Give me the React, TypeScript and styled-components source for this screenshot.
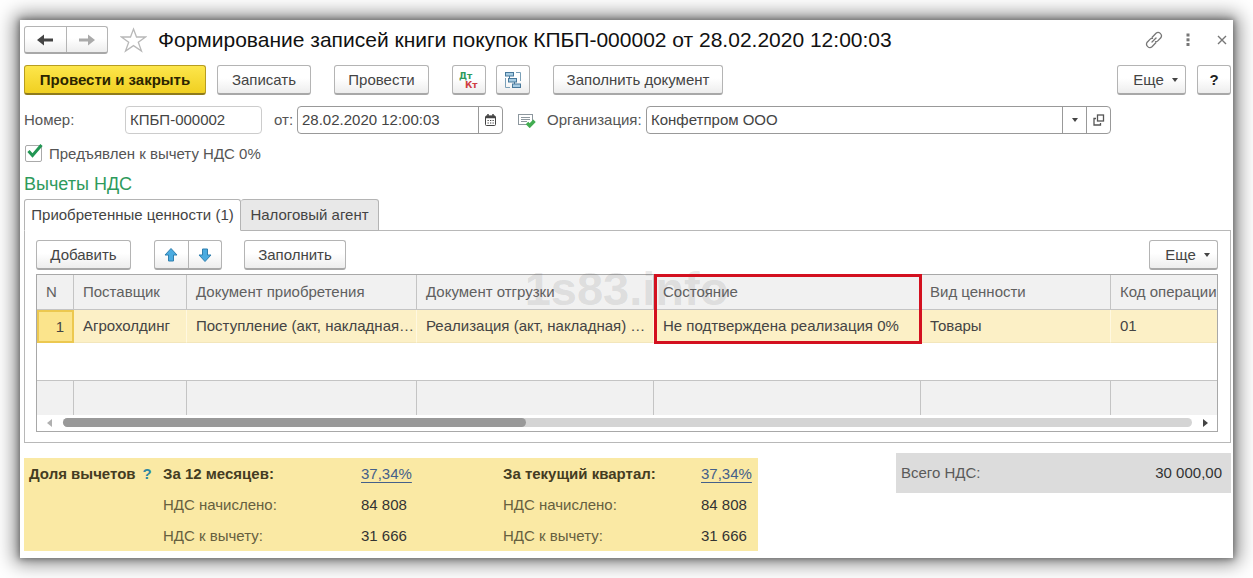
import React from "react";
import styled, { createGlobalStyle, css } from "styled-components";

const GlobalStyle = createGlobalStyle`
  * { box-sizing: border-box; }
  body {
    margin: 0;
    background: #fff;
    font-family: "Liberation Sans", Arial, sans-serif;
    font-size: 15px;
    line-height: 20px;
    color: #444;
  }
  button, input { font: inherit; color: inherit; margin: 0; }
  svg { display: block; flex: none; }
`;

const Page = styled.div`
  position: relative;
  padding: 20px;
`;

const Window = styled.main`
  display: flex;
  flex-direction: column;
  padding: 6px 2px 7px 4px;
  background: #fff;
  box-shadow: 0 0 6px 1px rgba(0, 0, 0, 0.35), 0 0 18px 5px rgba(0, 0, 0, 0.5);
`;

const Watermark = styled.div`
  position: absolute;
  inset: 0;
  display: flex;
  align-items: center;
  justify-content: center;
  font-size: 47px;
  font-weight: bold;
  color: rgba(90, 90, 90, 0.14);
  pointer-events: none;
`;

const TitleBar = styled.header`
  display: flex;
  align-items: center;
  height: 28px;
`;

const Title = styled.h1`
  flex: 1;
  margin: 0 0 0 11px;
  font-size: 21px;
  line-height: 28px;
  font-weight: normal;
  color: #111;
  white-space: nowrap;
`;

const raised = css`
  border: 1px solid #b4b4b4;
  border-bottom: 2px solid #a8a8a8;
  border-radius: 3px;
  background: linear-gradient(#fff 45%, #ededed);
`;

const SplitButtons = styled.div<{ $size: "nav" | "move" }>`
  ${raised}
  display: flex;
  height: ${(p) => (p.$size === "nav" ? 28 : 30)}px;
  width: ${(p) => (p.$size === "nav" ? 84 : 68)}px;
  margin-right: 12px;
`;

const SplitPart = styled.button`
  flex: 1;
  display: flex;
  align-items: center;
  justify-content: center;
  padding: 0;
  border: 0;
  background: none;
  & + & { border-left: 1px solid #b4b4b4; }
`;

const GhostButton = styled.button`
  display: flex;
  align-items: center;
  justify-content: center;
  width: 18px;
  height: 28px;
  padding: 0;
  border: 0;
  background: none;
`;

const WindowTools = styled.div`
  display: flex;
  gap: 16px;
`;

const StarButton = styled(GhostButton)`
  width: 27px;
`;

const Commands = styled.div`
  display: flex;
  align-items: center;
  gap: 11px;
`;

const MainCommands = styled(Commands)`
  margin-top: 11px;
`;

const Group = styled.div<{ $last?: boolean }>`
  display: flex;
  gap: 10px;
  margin-left: 12px;
  margin-right: ${(p) => (p.$last ? 12 : 0)}px;
`;

const Spacer = styled.div`
  flex: 1;
`;

const Button = styled.button<{ $width?: number; $primary?: boolean }>`
  ${raised}
  display: flex;
  align-items: center;
  justify-content: center;
  gap: 8px;
  min-width: ${(p) => p.$width ?? 34}px;
  height: 30px;
  padding: 0;
  white-space: nowrap;
  ${(p) =>
    p.$primary &&
    css`
      border-color: #b79d21 #b79d21 #8f7b1c;
      background: linear-gradient(#fde64b, #f0d022);
      color: #2b2500;
      font-weight: bold;
    `}
`;

const MoreButton = styled(Button)`
  padding-left: 8px;
`;

const HelpButton = styled(Button)`
  font-weight: bold;
  color: #222;
`;

const Fields = styled.div`
  display: flex;
  align-items: center;
  height: 28px;
  margin-top: 11px;
`;

const FieldLabel = styled.label<{ $width: number }>`
  flex: none;
  width: ${(p) => p.$width}px;
  white-space: nowrap;
  color: #555;
`;

const Field = styled.div<{ $width?: number; $light?: boolean }>`
  display: flex;
  ${(p) => (p.$width ? `width: ${p.$width}px;` : "flex: 1;")}
  height: 28px;
  border: 1px solid ${(p) => (p.$light ? "#ccc" : "#999")};
  border-radius: 4px;
  overflow: hidden;
`;

const FieldInput = styled.input`
  flex: 1;
  min-width: 0;
  padding: 0 4px;
  border: 0;
  background: none;
  outline: 0;
`;

const FieldButton = styled.button`
  display: flex;
  align-items: center;
  justify-content: center;
  width: 24px;
  padding: 0;
  border: 0;
  border-left: 1px solid #999;
  background: none;
`;

const FromLabel = styled(FieldLabel)`
  margin-left: 12px;
`;

const StatusIcon = styled.span`
  margin: 0 11px 0 15px;
`;

const OrgField = styled(Field)`
  margin-right: 120px;
`;

const CheckRow = styled.label`
  display: flex;
  align-items: center;
  gap: 6px;
  height: 20px;
  margin-top: 10px;
  color: #555;
`;

const CheckWrap = styled.span`
  position: relative;
  display: block;
  width: 19px;
  height: 18px;
  svg { position: absolute; left: 3px; top: -1px; pointer-events: none; }
`;

const CheckBox = styled.input`
  appearance: none;
  display: block;
  width: 17px;
  height: 17px;
  margin: 0 0 0 1px;
  border: 1px solid #aaa;
  border-radius: 2px;
  background: #fff;
`;

const SectionTitle = styled.h2`
  margin: 9px 0 0;
  font-size: 18px;
  line-height: 22px;
  font-weight: normal;
  color: #2e9a5c;
`;

const Tabs = styled.div`
  display: flex;
  height: 32px;
  margin-top: 4px;
  position: relative;
  z-index: 1;
  margin-bottom: -1px;
`;

const Tab = styled.button<{ $active?: boolean }>`
  width: ${(p) => (p.$active ? 217 : 138)}px;
  padding: 0;
  border: 1px solid #b4b4b4;
  border-bottom-color: ${(p) => (p.$active ? "#fff" : "#b4b4b4")};
  border-left-width: ${(p) => (p.$active ? 1 : 0)}px;
  border-radius: 3px 3px 0 0;
  background: ${(p) => (p.$active ? "#fff" : "#e8e8e8")};
  white-space: nowrap;
`;

const Panel = styled.section`
  padding: 9px 12px 10px 11px;
  border: 1px solid #b8b8b8;
`;

const TableFrame = styled.div`
  margin-top: 4px;
  border: 1px solid #a8a8a8;
  padding-bottom: 4px;
`;

const Table = styled.table`
  width: 100%;
  table-layout: fixed;
  border-collapse: separate;
  border-spacing: 0;
  th, td {
    padding: 0 0 0 9px;
    text-align: left;
    font-weight: normal;
    white-space: nowrap;
    border-right: 1px solid #c4c4c4;
  }
  th:last-child, td:last-child { border-right: 0; }
`;

const HeadCell = styled.th`
  position: relative;
  height: 35px;
  background: #f1f1f1;
  border-bottom: 1px solid #c4c4c4;
  color: #606060;
`;

const BodyCell = styled.td`
  height: 33px;
  background: #fcf0c6;
  border-bottom: 1px solid #f3e6bb;
  && { border-right-color: #fff8e0; }
`;

const NumberCell = styled(BodyCell)`
  && {
    padding: 0 8px 0 0;
    text-align: right;
    border: 2px solid #ecc850;
    background: #fbe48c;
  }
`;

const EmptyCell = styled.td`
  height: 37px;
  && { border-right: 0; }
`;

const TotalCell = styled.td`
  height: 35px;
  background: #f1f1f1;
  border-top: 1px solid #c4c4c4;
`;

const Highlight = styled.span`
  position: absolute;
  z-index: 2;
  left: 0;
  right: -2px;
  top: -1px;
  height: 70px;
  border: 3px solid #d3101f;
  pointer-events: none;
`;

const ScrollRow = styled.div`
  display: flex;
  align-items: center;
  gap: 11px;
  height: 9px;
  margin: 3px 9px 0 10px;
`;

const Track = styled.div`
  flex: 1;
  height: 9px;
  border-radius: 5px;
  background: #d4d4d4;
`;

const Thumb = styled.div`
  width: 41%;
  height: 9px;
  border-radius: 5px;
  background: #999;
`;

const Summary = styled.footer`
  display: flex;
  align-items: flex-start;
  justify-content: space-between;
  margin-top: 10px;
`;

const Share = styled.div`
  display: grid;
  grid-template-columns: 134px 198px 142px 198px 57px;
  grid-auto-rows: 31px;
  align-items: center;
  width: 734px;
  margin-top: 5px;
  padding-left: 5px;
  background: #fae9a4;
  white-space: nowrap;
`;

const ShareTitle = styled.strong`
  grid-column: 1;
  color: #443c22;
`;

const Hint = styled.a`
  margin-left: 7px;
  color: #2f87a0;
  text-decoration: none;
`;

const Period = styled.strong`
  color: #443c22;
`;

const Caption = styled.span<{ $first?: boolean }>`
  ${(p) => p.$first && "grid-column: 2;"}
  color: #66603f;
`;

const Percent = styled.a`
  color: #44608a;
  text-underline-offset: 3px;
`;

const Total = styled.div`
  display: flex;
  align-items: center;
  justify-content: space-between;
  width: 335px;
  height: 40px;
  padding: 0 9px 0 5px;
  background: #dcdcdc;
  color: #5a5a5a;
`;

const Amount = styled.span`
  color: #333;
`;

const NavArrow = ({ color, flip }: { color: string; flip?: boolean }) => (
  <svg width="16" height="12" viewBox="0 0 16 12" fill={color}>
    <path d={flip ? "M16 6 9 0.500V4.500H0V7.500H9V11.500Z" : "M0 6 7 0.500V4.500H16V7.500H7V11.500Z"} />
  </svg>
);

const Star = () => (
  <svg width="27" height="26" viewBox="0 0 27 26" fill="#fff" stroke="#b8b8b8" strokeWidth="1.300">
    <path d="M13.500 2 16.500 10H25.500L18.300 15.200 21.500 24 13.500 18.600 5.500 24 8.700 15.200 1.500 10H10.500Z" />
  </svg>
);

const LinkIcon = () => (
  <svg width="18" height="18" viewBox="0 0 18 18" fill="none" stroke="#777" strokeWidth="1.300" strokeLinecap="round">
    <path d="M7.200 6.200 11 2.200C13.800-0.200 18 3.500 15.800 6.800L12.800 9.900C12.200 10.500 11.300 10.800 10.500 10.600" />
    <path d="M10.800 11.800 7 15.800C4.200 18.200 0 14.500 2.200 11.200L5.200 8.100C5.800 7.500 6.700 7.200 7.500 7.400" />
    <path d="M7 11 11 7" />
  </svg>
);

const DotsIcon = () => (
  <svg width="4" height="14" viewBox="0 0 4 14" fill="#777">
    <rect x="0.500" y="0.500" width="3" height="3" />
    <rect x="0.500" y="5.300" width="3" height="3" />
    <rect x="0.500" y="10" width="3" height="3" />
  </svg>
);

const CloseIcon = () => (
  <svg width="10" height="10" viewBox="0 0 10 10" stroke="#777" strokeWidth="1.400">
    <path d="M1 1 9 9M9 1 1 9" />
  </svg>
);

const Caret = () => (
  <svg width="6" height="4" viewBox="0 0 6 4" fill="#444">
    <path d="M0 0H6L3 4Z" />
  </svg>
);

const DtKtIcon = () => (
  <svg width="20" height="20" viewBox="0 0 20 20" fontFamily="DejaVu Sans, sans-serif" fontSize="9" fontWeight="bold">
    <text x="0" y="9" fill="#2e9a5c">Дт</text>
    <text x="6" y="18" fill="#cf3d42">Кт</text>
  </svg>
);

const StructureIcon = () => (
  <svg width="18" height="18" viewBox="0 0 18 18" fill="#a8cde4" stroke="#47789b">
    <path d="M12 1.500H16.500V10M6 16.500H1.500V7" fill="none" stroke="#7ba0b8" />
    <path d="M5.500 5V7.500M10.500 11V13.500" fill="none" />
    <rect x="1.500" y="1.500" width="8" height="3.500" />
    <rect x="4.500" y="7.500" width="8" height="3.500" />
    <rect x="8.500" y="13" width="8" height="3.500" />
  </svg>
);

const CalendarIcon = () => (
  <svg width="11" height="12" viewBox="0 0 11 12" fill="none" stroke="#444">
    <rect x="0.500" y="2" width="10" height="9.500" rx="1" />
    <path d="M1 3H10" strokeWidth="2.500" />
    <path d="M3 0V2M8 0V2" strokeWidth="1.500" />
    <path d="M2.500 6.500H9M2.500 9H9" strokeDasharray="1.300 1.200" />
  </svg>
);

const PostedIcon = () => (
  <svg width="18" height="15" viewBox="0 0 18 15" fill="none">
    <rect x="0.500" y="1.500" width="14" height="10" fill="#fff" stroke="#8d979e" />
    <path d="M3 4.500H12M3 6.500H12M3 8.500H9" stroke="#8d979e" />
    <path d="M9 10 11.700 12.700 16.500 7.700" stroke="#43ad52" strokeWidth="3.500" />
  </svg>
);

const OpenIcon = () => (
  <svg width="12" height="12" viewBox="0 0 12 12" fill="none" stroke="#555" strokeWidth="1.300">
    <rect x="4.500" y="1" width="6" height="6" />
    <path d="M3 4.500H1V11H7.500V9" />
  </svg>
);

const CheckIcon = () => (
  <svg width="16" height="15" viewBox="0 0 16 15" fill="none" stroke="#219653" strokeWidth="3">
    <path d="M1.500 7 5.500 11.500 14.500 1" />
  </svg>
);

const MoveArrow = ({ down }: { down?: boolean }) => (
  <svg width="14" height="14" viewBox="0 0 14 14" fill="#4aabe0" stroke="#2f7fae">
    <path d={down ? "M7 13.500 13 7H9.500V1H4.500V7H1Z" : "M7 0.500 13 7H9.500V13H4.500V7H1Z"} />
  </svg>
);

const ScrollArrow = ({ right }: { right?: boolean }) => (
  <svg width="5" height="8" viewBox="0 0 5 8" fill={right ? "#444" : "#b0b0b0"}>
    <path d={right ? "M0 0 5 4 0 8Z" : "M5 0 0 4 5 8Z"} />
  </svg>
);

const columns: { title: string; value: string; width?: number }[] = [
  { title: "N", value: "1", width: 37 },
  { title: "Поставщик", value: "Агрохолдинг", width: 113 },
  { title: "Документ приобретения", value: "Поступление (акт, накладная…", width: 230 },
  { title: "Документ отгрузки", value: "Реализация (акт, накладная) …", width: 237 },
  { title: "Состояние", value: "Не подтверждена реализация 0%", width: 267 },
  { title: "Вид ценности", value: "Товары", width: 190 },
  { title: "Код операции", value: "01" },
];

export default function App() {
  return (
    <Page>
      <GlobalStyle />
      <Window>
        <TitleBar>
          <SplitButtons $size="nav">
            <SplitPart aria-label="Назад"><NavArrow color="#444" /></SplitPart>
            <SplitPart aria-label="Вперед"><NavArrow color="#aaa" flip /></SplitPart>
          </SplitButtons>
          <StarButton aria-label="В избранное"><Star /></StarButton>
          <Title>Формирование записей книги покупок КПБП-000002 от 28.02.2020 12:00:03</Title>
          <WindowTools>
            <GhostButton aria-label="Ссылка"><LinkIcon /></GhostButton>
            <GhostButton aria-label="Меню"><DotsIcon /></GhostButton>
            <GhostButton aria-label="Закрыть"><CloseIcon /></GhostButton>
          </WindowTools>
        </TitleBar>

        <MainCommands>
          <Button $primary $width={182}>Провести и закрыть</Button>
          <Button $width={94}>Записать</Button>
          <Group><Button $width={95}>Провести</Button></Group>
          <Group $last>
            <Button aria-label="Проводки"><DtKtIcon /></Button>
            <Button aria-label="Структура подчиненности"><StructureIcon /></Button>
          </Group>
          <Button $width={170}>Заполнить документ</Button>
          <Spacer />
          <MoreButton $width={69}>Еще <Caret /></MoreButton>
          <HelpButton>?</HelpButton>
        </MainCommands>

        <Fields>
          <FieldLabel $width={101} htmlFor="number">Номер:</FieldLabel>
          <Field $width={137} $light><FieldInput id="number" defaultValue="КПБП-000002" /></Field>
          <FromLabel $width={23} htmlFor="date">от:</FromLabel>
          <Field $width={206}>
            <FieldInput id="date" defaultValue="28.02.2020 12:00:03" />
            <FieldButton aria-label="Календарь"><CalendarIcon /></FieldButton>
          </Field>
          <StatusIcon><PostedIcon /></StatusIcon>
          <FieldLabel $width={99} htmlFor="org">Организация:</FieldLabel>
          <OrgField>
            <FieldInput id="org" defaultValue="Конфетпром ООО" />
            <FieldButton aria-label="Выбрать"><Caret /></FieldButton>
            <FieldButton aria-label="Открыть"><OpenIcon /></FieldButton>
          </OrgField>
        </Fields>

        <CheckRow>
          <CheckWrap><CheckBox type="checkbox" defaultChecked /><CheckIcon /></CheckWrap>
          Предъявлен к вычету НДС 0%
        </CheckRow>

        <SectionTitle>Вычеты НДС</SectionTitle>
        <Tabs role="tablist">
          <Tab role="tab" aria-selected $active>Приобретенные ценности (1)</Tab>
          <Tab role="tab">Налоговый агент</Tab>
        </Tabs>
        <Panel>
          <Commands>
            <Button $width={95}>Добавить</Button>
            <Group $last>
              <SplitButtons $size="move">
                <SplitPart aria-label="Вверх"><MoveArrow /></SplitPart>
                <SplitPart aria-label="Вниз"><MoveArrow down /></SplitPart>
              </SplitButtons>
              <Button $width={102}>Заполнить</Button>
            </Group>
            <Spacer />
            <MoreButton $width={69}>Еще <Caret /></MoreButton>
          </Commands>
          <TableFrame>
            <Table>
              <colgroup>
                {columns.map((c) => <col key={c.title} width={c.width} />)}
              </colgroup>
              <thead>
                <tr>
                  {columns.map((c) => (
                    <HeadCell key={c.title}>
                      {c.title}
                      {c.title === "Состояние" && <Highlight />}
                    </HeadCell>
                  ))}
                </tr>
              </thead>
              <tbody>
                <tr>
                  {columns.map((c, i) =>
                    i === 0 ? <NumberCell key={c.title}>{c.value}</NumberCell> : <BodyCell key={c.title}>{c.value}</BodyCell>
                  )}
                </tr>
                <tr><EmptyCell colSpan={7} /></tr>
              </tbody>
              <tfoot>
                <tr>{columns.map((c) => <TotalCell key={c.title} />)}</tr>
              </tfoot>
            </Table>
            <ScrollRow>
              <ScrollArrow />
              <Track><Thumb /></Track>
              <ScrollArrow right />
            </ScrollRow>
          </TableFrame>
        </Panel>

        <Summary>
          <Share>
            <ShareTitle>Доля вычетов<Hint href="#help">?</Hint></ShareTitle>
            <Period>За 12 месяцев:</Period>
            <Percent href="#year">37,34%</Percent>
            <Period>За текущий квартал:</Period>
            <Percent href="#quarter">37,34%</Percent>
            <Caption $first>НДС начислено:</Caption>
            <Amount>84 808</Amount>
            <Caption>НДС начислено:</Caption>
            <Amount>84 808</Amount>
            <Caption $first>НДС к вычету:</Caption>
            <Amount>31 666</Amount>
            <Caption>НДС к вычету:</Caption>
            <Amount>31 666</Amount>
          </Share>
          <Total>Всего НДС:<Amount>30 000,00</Amount></Total>
        </Summary>
      </Window>
      <Watermark>1s83.info</Watermark>
    </Page>
  );
}
